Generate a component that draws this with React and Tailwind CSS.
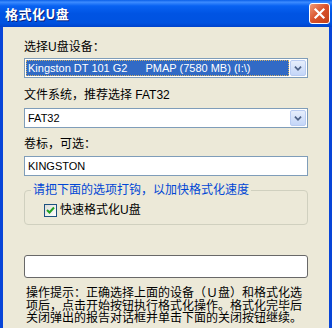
import React from "react";

const Chevron = () => (
  <svg width="16" height="16" viewBox="0 0 16 16">
    <path d="M4.5 6.5 L8 10 L11.5 6.5" fill="none" stroke="#4D6185" strokeWidth="2" />
  </svg>
);

const DropButton = () => (
  <div className="w-[16px] h-[16px] flex items-center justify-center rounded-[2px] border border-[#B9CCF2] bg-[linear-gradient(to_bottom,#E6EEFC,#C4D6F8)]">
    <Chevron />
  </div>
);

export default function App() {
  return (
    <div className="w-[332px] h-[328px] overflow-hidden flex flex-col bg-[#ECE9D8] font-['Liberation_Sans','Noto_Sans_CJK_SC',sans-serif] text-[12px] text-black">
      {/* title bar */}
      <div className="h-[27px] shrink-0 flex items-center justify-between pl-[5px] pr-[2px] bg-[linear-gradient(to_bottom,#0a5fe8_0%,#3d8cff_8%,#0862f2_22%,#0054e3_50%,#0052e0_85%,#0043cc_100%)]">
        <span className="text-white font-bold text-[13px] leading-[16px] tracking-[0.5px] [text-shadow:1px_1px_0_#0a1f7a] font-['Noto_Sans_CJK_SC',sans-serif]">
          格式化U盘
        </span>
        <div className="w-[21px] h-[21px] rounded-[3px] border border-white flex items-center justify-center bg-[linear-gradient(135deg,#F09A78,#D9512A_50%,#C2401A)]">
          <svg width="13" height="13" viewBox="0 0 13 13">
            <path d="M2.5 2.5 L10.5 10.5 M10.5 2.5 L2.5 10.5" stroke="white" strokeWidth="2.2" strokeLinecap="square" />
          </svg>
        </div>
      </div>

      {/* body */}
      <div className="flex-1 flex flex-col px-[21px] border-x-[3px] border-[#0845D8]">
        <div className="mt-[12px] leading-[16px]">选择U盘设备：</div>
        <div className="mt-[3px] h-[20px] border border-[#7F9DB9] bg-white flex items-center p-[1px] gap-[1px]">
          <div className="flex-1 h-[16px] bg-[#316AC5] text-white text-[11px] leading-[16px] pl-[2px] outline outline-1 outline-dotted outline-[#CFB06A] -outline-offset-1 flex">
            <span>Kingston DT 101 G2</span>
            <span className="ml-[18px]">PMAP (7580 MB) (I:\)</span>
          </div>
          <DropButton />
        </div>

        <div className="mt-[9px] leading-[16px]">文件系统，推荐选择 FAT32</div>
        <div className="mt-[5px] h-[20px] border border-[#7F9DB9] bg-white flex items-center p-[1px] gap-[1px]">
          <div className="flex-1 text-[11px] leading-[16px] pl-[2px]">FAT32</div>
          <DropButton />
        </div>

        <div className="mt-[8px] leading-[16px]">卷标，可选：</div>
        <div className="mt-[4px] h-[20px] border border-[#7F9DB9] bg-white text-[11px] leading-[18px] pl-[3px]">
          KINGSTON
        </div>

        <fieldset className="mt-[6px] border border-[#D0D0BF] rounded-[4px] pb-[6px]">
          <legend className="ml-[6px] px-[2px] leading-[16px] text-[#0046D5]">
            请把下面的选项打钩，以加快格式化速度
          </legend>
          <label className="mt-[4px] ml-[19px] flex items-center h-[16px] gap-[3px]">
            <span className="w-[13px] h-[13px] border border-[#1C5180] bg-[linear-gradient(135deg,#DCDCD7,#FFFFFF)] flex items-center justify-center">
              <svg width="9" height="9" viewBox="0 0 9 9">
                <path d="M1 4 L3.5 6.5 L8 1.5" fill="none" stroke="#21A121" strokeWidth="2" />
              </svg>
            </span>
            <span className="leading-[16px]">快速格式化U盘</span>
          </label>
        </fieldset>

        <div className="mt-[30px] h-[23px] border border-[#686868] rounded-[3px] bg-white" />

        <div className="mt-[8px] pl-[2px] text-[12px] font-['Noto_Sans_CJK_SC',sans-serif] flex flex-col">
          <div className="h-[12.5px] leading-[12.5px]">操作提示：正确选择上面的设备（Ｕ盘）和格式化选</div>
          <div className="h-[12.5px] leading-[12.5px]">项后，点击开始按钮执行格式化操作。格式化完毕后</div>
          <div className="h-[12.5px] leading-[12.5px]">关闭弹出的报告对话框并单击下面的关闭按钮继续。</div>
        </div>
      </div>
    </div>
  );
}
